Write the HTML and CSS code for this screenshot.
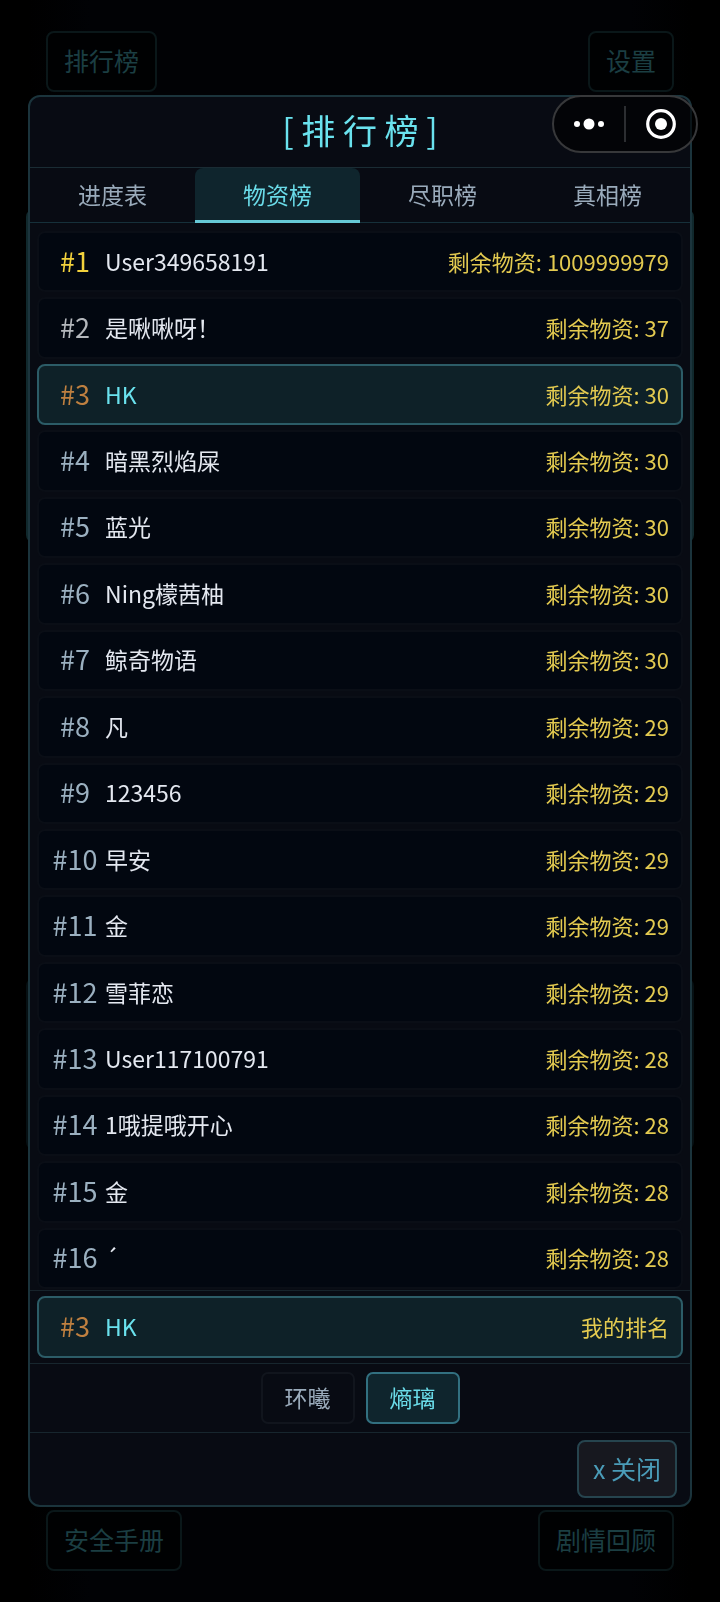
FILE: index.html
```
<!DOCTYPE html>
<html lang="zh-CN">
<head>
  <meta charset="UTF-8" />
  <meta name="viewport" content="width=device-width, initial-scale=1" />
  <title>排行榜</title>
  <link rel="stylesheet" href="styles.css">
</head>
<body>

  <div class="page">
    <header class="page-bar">
      <button class="page-btn">排行榜</button>
      <button class="page-btn">设置</button>
    </header>
    <main class="page-main">
      <section class="panel panel-status"></section>
      <section class="panel panel-log"></section>
    </main>
    <footer class="page-bar">
      <button class="page-btn">安全手册</button>
      <button class="page-btn">剧情回顾</button>
    </footer>
  </div>

  <div class="modal" role="dialog" aria-labelledby="modal-title">
    <h1 id="modal-title" class="modal-title">[ 排 行 榜 ]</h1>

    <nav class="tabs">
      <button class="tab">进度表</button>
      <button class="tab active">物资榜</button>
      <button class="tab">尽职榜</button>
      <button class="tab">真相榜</button>
    </nav>

    <ol class="rank-list">
      <li class="row"><span class="rank gold">#1</span><span class="name">User349658191</span><span class="score">剩余物资: 1009999979</span></li>
      <li class="row"><span class="rank silver">#2</span><span class="name">是啾啾呀！</span><span class="score">剩余物资: 37</span></li>
      <li class="row me"><span class="rank bronze">#3</span><span class="name">HK</span><span class="score">剩余物资: 30</span></li>
      <li class="row"><span class="rank">#4</span><span class="name">暗黑烈焰屎</span><span class="score">剩余物资: 30</span></li>
      <li class="row"><span class="rank">#5</span><span class="name">蓝光</span><span class="score">剩余物资: 30</span></li>
      <li class="row"><span class="rank">#6</span><span class="name">Ning檬茜柚</span><span class="score">剩余物资: 30</span></li>
      <li class="row"><span class="rank">#7</span><span class="name">鲸奇物语</span><span class="score">剩余物资: 30</span></li>
      <li class="row"><span class="rank">#8</span><span class="name">凡</span><span class="score">剩余物资: 29</span></li>
      <li class="row"><span class="rank">#9</span><span class="name">123456</span><span class="score">剩余物资: 29</span></li>
      <li class="row"><span class="rank">#10</span><span class="name">早安</span><span class="score">剩余物资: 29</span></li>
      <li class="row"><span class="rank">#11</span><span class="name">金</span><span class="score">剩余物资: 29</span></li>
      <li class="row"><span class="rank">#12</span><span class="name">雪菲恋</span><span class="score">剩余物资: 29</span></li>
      <li class="row"><span class="rank">#13</span><span class="name">User117100791</span><span class="score">剩余物资: 28</span></li>
      <li class="row"><span class="rank">#14</span><span class="name">1哦提哦开心</span><span class="score">剩余物资: 28</span></li>
      <li class="row"><span class="rank">#15</span><span class="name">金</span><span class="score">剩余物资: 28</span></li>
      <li class="row"><span class="rank">#16</span><span class="name">´</span><span class="score">剩余物资: 28</span></li>
    </ol>

    <div class="my-rank">
      <div class="row me"><span class="rank bronze">#3</span><span class="name">HK</span><span class="score">我的排名</span></div>
    </div>

    <div class="servers">
      <button class="server">环曦</button>
      <button class="server active">熵璃</button>
    </div>

    <div class="modal-footer">
      <button class="close">x 关闭</button>
    </div>
  </div>

  <!-- mini program capsule -->
  <div class="capsule">
    <button class="capsule-btn" aria-label="更多">
      <svg width="32" height="32" viewBox="0 0 32 32" fill="#fff">
        <circle cx="4" cy="16" r="3" />
        <circle cx="16" cy="16" r="5.5" />
        <circle cx="28" cy="16" r="3" />
      </svg>
    </button>
    <span class="capsule-line"></span>
    <button class="capsule-btn" aria-label="退出">
      <svg width="32" height="32" viewBox="0 0 32 32">
        <circle cx="16" cy="16" r="13.3" fill="none" stroke="#fff" stroke-width="3.2" />
        <circle cx="16" cy="16" r="6" fill="#fff" />
      </svg>
    </button>
  </div>

</body>
</html>
```
FILE: styles.css
```
* {
  box-sizing: border-box;
}

body {
  margin: 0;
  background: #000;
  color: #e4e8f0;
  font-family: "Noto Sans CJK SC", sans-serif;
}

button {
  margin: 0;
  padding: 0;
  background: none;
  border: none;
  color: inherit;
  font-family: inherit;
  cursor: pointer;
}

/* page behind the dialog */
.page {
  display: flex;
  flex-direction: column;
  min-height: 100vh;
  padding: 31px 26px;
  background: linear-gradient(90deg, #000 28px, #010205 90px, #010205 calc(100% - 90px), #000 calc(100% - 28px));
}

.page-bar {
  display: flex;
  justify-content: space-between;
  padding: 0 20px;
}

.page-btn {
  height: 61px;
  padding: 0 16px 4px;
  background: #000102;
  border: 2px solid #0a1719;
  border-radius: 8px;
  color: #1b3e42;
  font-size: 25px;
  line-height: 36px;
}

.page-main {
  flex: 1;
  padding-top: 117px;
}

.panel {
  border: 2px solid #10282c;
  border-radius: 8px;
}

.panel-status {
  height: 334px;
  margin-bottom: 435px;
}

.panel-log {
  height: 172px;
  border-color: #061013;
}

/* dialog */
.modal {
  position: fixed;
  top: 95px;
  bottom: 95px;
  left: 28px;
  right: 28px;
  display: flex;
  flex-direction: column;
  background: #080b13;
  border: 2px solid #1b343c;
  border-radius: 12px;
  overflow: hidden;
}

.modal-title {
  margin: 0;
  padding: 8px 0 12px;
  border-bottom: 1px solid #1a2c34;
  color: #6ae2ee;
  font-size: 34px;
  font-weight: 400;
  line-height: 50px;
  text-align: center;
}

.tabs {
  display: flex;
  border-bottom: 1px solid #16303a;
}

.tab {
  flex: 1;
  height: 55px;
  margin-bottom: -1px;
  border-bottom: 3px solid transparent;
  color: #9aabbb;
  font-size: 23px;
  line-height: 32px;
}

.tab.active {
  background: #0f252d;
  border-bottom-color: #66c8d6;
  border-radius: 8px 8px 0 0;
  color: #6adbe8;
}

.rank-list {
  flex: 1;
  display: flex;
  flex-direction: column;
  gap: 5px;
  min-height: 0;
  margin: 0;
  padding: 8px 7px 1px;
  list-style: none;
  overflow: hidden;
}

.rank-list .row {
  flex: 1;
}

.row {
  display: flex;
  align-items: center;
  padding: 0 12px 2px 11px;
  background: #020710;
  border: 2px solid #0a0e16;
  border-radius: 8px;
}

.row.me {
  background: #0e2128;
  border-color: #2c5c67;
}

.rank {
  width: 50px;
  margin-right: 5px;
  color: #9bb0c0;
  font-size: 27px;
  line-height: 36px;
  text-align: center;
}

.rank.gold {
  color: #f2d13c;
}

.rank.silver {
  color: #b4b7bc;
}

.rank.bronze {
  color: #bf8040;
}

.name {
  flex: 1;
  font-size: 23px;
  line-height: 32px;
}

.row.me .name {
  color: #6ae2ee;
}

.score {
  color: #e3ca50;
  font-size: 22px;
  line-height: 32px;
}

.my-rank {
  padding: 5px 7px;
  border-top: 1px solid #17232b;
}

.my-rank .row {
  height: 62px;
}

.servers {
  display: flex;
  justify-content: center;
  gap: 11px;
  padding: 8px;
  border-top: 1px solid #17262e;
}

.server {
  height: 52px;
  padding: 0 22px 2px;
  border: 2px solid #11151d;
  border-radius: 7px;
  color: #9aabbb;
  font-size: 23px;
  line-height: 32px;
}

.server.active {
  background: #0f252d;
  border-color: #327080;
  color: #6adbe8;
}

.modal-footer {
  display: flex;
  justify-content: flex-end;
  padding: 7px 13px;
  border-top: 1px solid #17262e;
}

.close {
  height: 58px;
  padding: 0 14px 2px;
  background: #17181f;
  border: 2px solid #26444e;
  border-radius: 8px;
  color: #4a9cb8;
  font-size: 25px;
  line-height: 36px;
}

/* capsule */
.capsule {
  position: fixed;
  top: 95px;
  right: 22px;
  display: flex;
  align-items: center;
  width: 146px;
  height: 58px;
  background: rgba(0, 0, 0, 0.6);
  border: 2px solid #37383a;
  border-radius: 29px;
}

.capsule-btn {
  flex: 1;
  display: flex;
  justify-content: center;
}

.capsule-line {
  width: 2px;
  height: 36px;
  background: #2c2e31;
}
```
